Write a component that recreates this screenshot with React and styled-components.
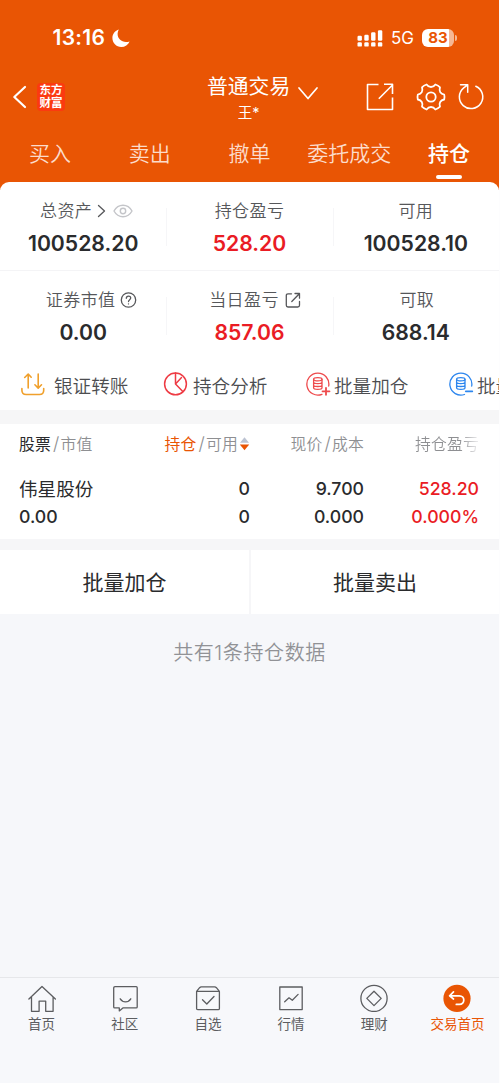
import React from 'react';
import styled, { createGlobalStyle } from 'styled-components';

const ORANGE = '#e95504';
const RED = '#ea1c24';
const INK = '#2a2b2d';

const GlobalStyle = createGlobalStyle`
  * { box-sizing: border-box; }
  body {
    margin: 0;
    background: #fdfdfe;
    font-family: Inter, 'Noto Sans CJK SC', sans-serif;
    color: ${INK};
  }
`;

const Page = styled.div`
  width: 499px;
  height: 1083px;
  display: flex;
  flex-direction: column;
  overflow: hidden;
  background: #f6f7fa;
`;

const Header = styled.header`
  height: 190px;
  flex: none;
  background: ${ORANGE};
  color: #fff;
`;

const StatusBar = styled.div`
  height: 66px;
  padding: 10px 42px 0 52.5px;
  display: flex;
  align-items: center;
`;

const Clock = styled.span`
  font-size: 21px;
  font-weight: 600;
  line-height: 24px;
  letter-spacing: 0.3px;
  width: 59px;
  white-space: nowrap;
`;

const StatusRight = styled.div`
  margin-left: auto;
  display: flex;
  align-items: center;
`;

const Network = styled.span`
  width: 24px;
  margin: 0 7px 0 8px;
  font-size: 17px;
  line-height: 20px;
`;

const Battery = styled.div`
  width: 32px;
  height: 18px;
  border-radius: 6px;
  background: linear-gradient(90deg, #fff 84%, #f6b894 84%);
  color: ${ORANGE};
  font-size: 15px;
  font-weight: 700;
  line-height: 18px;
  text-align: center;
`;

const BatteryTip = styled.div`
  width: 2px;
  height: 6px;
  margin-left: 1px;
  border-radius: 0 2px 2px 0;
  background: #f6b894;
`;

const TitleBar = styled.div`
  height: 62px;
  display: grid;
  grid-template-columns: 179px 1fr 145px;
  align-items: center;
`;

const TitleLeft = styled.div`
  display: flex;
  align-items: center;
  padding: 0 0 1px 12px;
`;

const Logo = styled.div`
  width: 28px;
  height: 28px;
  margin-left: 10px;
  border-radius: 4px;
  background: #fb3a10;
  display: flex;
  flex-direction: column;
  align-items: center;
  justify-content: center;
  font-size: 11.5px;
  font-weight: 700;
  line-height: 12.5px;
`;

const TitleCenter = styled.div`
  display: flex;
  padding: 2px 0 0 28px;
`;

const Account = styled.div`
  display: flex;
  flex-direction: column;
  align-items: center;
`;

const AccountName = styled.span`
  font-size: 20.8px;
  line-height: 28px;
  white-space: nowrap;
`;

const AccountOwner = styled.span`
  font-size: 14.5px;
  line-height: 22px;
  margin-top: 1px;
`;

const TitleRight = styled.div`
  display: flex;
  align-items: center;
  padding: 0 0 1px 11px;
`;

const Tabs = styled.nav`
  display: grid;
  grid-template-columns: repeat(5, 1fr);
  padding-top: 11px;
`;

const Tab = styled.div`
  display: flex;
  flex-direction: column;
  align-items: center;
  font-size: 21px;
  line-height: 30px;
  font-weight: ${p => (p.$active ? 500 : 350)};
  color: ${p => (p.$active ? '#fff' : '#fcdccb')};
  white-space: nowrap;

  &::after {
    content: '';
    width: 26px;
    height: 4px;
    margin-top: 6px;
    border-radius: 2px;
    background: ${p => (p.$active ? '#fff' : 'transparent')};
  }
`;

const Sheet = styled.section`
  flex: none;
  margin-top: -8.5px;
  height: 228.5px;
  border-radius: 9px 9px 0 0;
  background: #fff;
`;

const SummaryRow = styled.div`
  height: ${p => p.$height}px;
  display: grid;
  grid-template-columns: repeat(3, 1fr);
  border-bottom: ${p => (p.$line ? '1px solid #f4f4f6' : 'none')};
`;

const SummaryCell = styled.div`
  position: relative;
  display: flex;
  flex-direction: column;
  align-items: center;
  padding-top: 16px;

  & + &::before {
    content: '';
    position: absolute;
    left: 0;
    top: 26px;
    width: 1px;
    height: 38px;
    background: #f6f6f8;
  }
`;

const SummaryLabel = styled.div`
  display: flex;
  align-items: center;
  height: 26px;
  padding-left: ${p => p.$indent || 0}px;
  font-size: 17px;
  font-weight: 350;
  letter-spacing: 0.4px;
  line-height: 26px;
  color: #56575a;
  white-space: nowrap;
`;

const SummaryValue = styled.div`
  margin-top: 5px;
  font-size: 21.2px;
  font-weight: 600;
  line-height: 28px;
  color: ${p => (p.$up ? RED : INK)};
`;

const Tools = styled.div`
  display: flex;
  height: 51px;
  padding-left: 20px;
  overflow: hidden;
`;

const Tool = styled.div`
  flex: none;
  width: 143px;
  display: flex;
  align-items: center;
  font-size: 18.6px;
  font-weight: 350;
  color: #4c4d50;
  white-space: nowrap;

  svg {
    margin-right: ${p => p.$gap}px;
  }
`;

const Holdings = styled.section`
  flex: none;
  height: 129px;
  border-top: 14px solid #f6f6f7;
  background: #fff;
`;

const HoldingRow = styled.div`
  display: grid;
  grid-template-columns: 120px 111px 114px 115px;
  padding: 0 0 0 19px;
  height: ${p => p.$height}px;
  margin-bottom: ${p => p.$gap || 0}px;
`;

const HeadCell = styled.div`
  display: flex;
  align-items: center;
  justify-content: ${p => (p.$left ? 'flex-start' : 'flex-end')};
  font-size: 15.8px;
  font-weight: 350;
  letter-spacing: 0.2px;
  color: #8e8f92;
  white-space: nowrap;
`;

const Strong = styled.span`
  font-weight: 400;
  color: ${p => p.$color};
`;

const Slash = styled.span`
  font-size: 18px;
  margin: 0 1px 0 2px;
`;

const Fade = styled.span`
  background: linear-gradient(90deg, #8e8f92 70%, #e4e4e6 96%);
  background-clip: text;
  color: transparent;
`;

const Cell = styled.div`
  display: flex;
  flex-direction: column;
  align-items: ${p => (p.$left ? 'flex-start' : 'flex-end')};
  font-size: 17.7px;
  font-weight: 500;
  line-height: 28px;
  color: ${p => (p.$up ? RED : INK)};
`;

const StockName = styled.span`
  font-size: 18.6px;
  font-weight: 400;
`;

const Actions = styled.div`
  flex: none;
  display: grid;
  grid-template-columns: 249px 1fr;
  gap: 2px;
  height: 75px;
  padding-top: 11px;
  background: #f6f6f8;
`;

const Action = styled.button`
  border: 0;
  padding: 0 0 3px;
  background: #fff;
  color: ${INK};
  font: inherit;
  font-size: 21px;
`;

const Count = styled.p`
  margin: 24px 0 0;
  font-size: 20px;
  font-weight: 350;
  line-height: 30px;
  letter-spacing: 0.6px;
  text-align: center;
  color: #919296;
`;

const BottomNav = styled.nav`
  flex: none;
  height: 106px;
  margin-top: auto;
  padding-top: 6px;
  display: grid;
  grid-template-columns: repeat(6, 1fr);
  border-top: 1px solid #e6e7ea;
  background: #f7f8fb;
`;

const NavItem = styled.div`
  display: flex;
  flex-direction: column;
  align-items: center;
  font-size: 13.5px;
  line-height: 20px;
  color: ${p => (p.$active ? ORANGE : '#5c5d60')};
  white-space: nowrap;

  svg {
    margin-bottom: 2px;
  }
`;

const Icon = styled.svg.attrs(p => ({
  width: p.$w,
  height: p.$h,
  viewBox: `0 0 ${p.$w} ${p.$h}`
}))`
  flex: none;
  display: block;
  fill: none;
  stroke: ${p => p.$color || 'currentColor'};
  stroke-width: ${p => p.$stroke ?? 1.4};
  stroke-linecap: round;
  stroke-linejoin: round;
  margin-left: ${p => p.$ml || 0}px;
`;

const MoonIcon = () => (
  <Icon $w={18} $h={19} $stroke={0}>
    <path fill="#fff" d="M6.8.6C3.300 1.700.4 4.900.4 9c0 5 3.900 8.900 8.900 8.900 3.700 0 6.900-2 8.300-5.500-6.200 2.300-12.300-1.600-12-7.800.1-1.500.5-2.800 1.200-4z" />
  </Icon>
);

const SIGNAL = [5, 6, 8.5, 10.5];

const SignalIcon = () => (
  <Icon $w={26} $h={19} $stroke={0}>
    {SIGNAL.map((h, i) => (
      <g key={i} fill="#fff">
        <rect x={0.5 + i * 6.8} y={11.7 - h} width="4.4" height={h} rx="1.2" />
        <rect x={0.5 + i * 6.8} y="13.2" width="4.4" height="4.4" rx="1.2" />
      </g>
    ))}
  </Icon>
);

const DatabaseIcon = ({ color, sign }) => (
  <Icon $w={25} $h={26} $color={color} $stroke={1.3}>
    <path d={sign === '+' ? 'M16 23.300A11 11 0 1 1 22.700 15' : 'M15.500 23.500A11 11 0 1 1 22.700 15'} />
    <ellipse cx="11.800" cy="8.300" rx="4.200" ry="1.600" />
    <path d="M7.600 8.300v8.400c0 .9 1.900 1.600 4.200 1.600s4.200-.7 4.200-1.600V8.300M7.600 11.100c0 .9 1.900 1.600 4.200 1.600s4.200-.7 4.200-1.600M7.600 13.900c0 .9 1.900 1.600 4.200 1.600s4.200-.7 4.200-1.600" />
    <path strokeWidth="1.800" d={sign === '+' ? 'M16.500 20.300h7M20 16.800v7' : 'M16.800 20.300h6.500'} />
  </Icon>
);

const TransferIcon = () => (
  <Icon $w={26} $h={26} $color="#f0a02c" $stroke={1.6}>
    <path d="M8.200 17V3.200M4.700 6.500L8.200 3l3 3.200M18.200 3v14M14.900 13.800l3.300 3.300 3.300-3.300M1.900 17.500v1.700c0 3 1.600 4.300 4.200 4.300h13.400c2.600 0 4.200-1.300 4.200-4.300v-1.700" />
  </Icon>
);

const PieIcon = () => (
  <Icon $w={25} $h={26} $color="#ee3b44" $stroke={1.5}>
    <circle cx="12.500" cy="12.900" r="10.900" />
    <path d="M12.500 2v10.900l7.300 7.600M12.500 12.900l6-6.300" />
  </Icon>
);

const NAV_ITEMS = [
  {
    label: '首页',
    icon: <path d="M.9 15L14 2.500 27.400 15M3.500 13v14.300h7.600V17.100h6.600v10.200h7.400V13" />
  },
  {
    label: '社区',
    icon: <path d="M4 2.700h21.200q1 0 1 1v19.200q0 1-1 1H11.900l-3.600 3v-3H3.700q-1 0-1-1V3.700q0-1 1.300-1zM9.200 14.800c2.700 4 8 4 10.600 0" />
  },
  {
    label: '自选',
    icon: <path d="M2.600 7.400h22.800v17q0 1.200-1.200 1.200H3.800q-1.200 0-1.200-1.200zM2.600 7.400l3-3.700q.7-.8 1.800-.8h13.200q1.100 0 1.800.8l3 3.700M8.500 15.700l4.300 4.300 7.200-7.500" />
  },
  {
    label: '行情',
    icon: <path d="M2.800 3h22.400v22.600H2.800zM7.700 17.700l4.300-3.900 3.300 2.500 5.800-5.900" />
  },
  {
    label: '理财',
    icon: (
      <>
        <circle cx="14" cy="14.400" r="13.100" />
        <path d="M14 7.200l7.200 7.200L14 21.600l-7.200-7.200z" />
      </>
    )
  },
  {
    label: '交易首页',
    active: true,
    icon: (
      <>
        <circle cx="14" cy="14.400" r="13.600" fill={ORANGE} stroke="none" />
        <path stroke="#fff" strokeWidth="1.700" d="M10.500 7.800l-3.900 4 3.900 3.200M6.900 11.800h9.400c6 0 6 8.600 0 8.600h-3" />
      </>
    )
  }
];

const TABS = ['买入', '卖出', '撤单', '委托成交', '持仓'];

function App() {
  return (
    <>
      <GlobalStyle />
      <Page>
        <Header>
          <StatusBar>
            <Clock>13:16</Clock>
            <MoonIcon />
            <StatusRight>
              <SignalIcon />
              <Network>5G</Network>
              <Battery>83</Battery>
              <BatteryTip />
            </StatusRight>
          </StatusBar>

          <TitleBar>
            <TitleLeft>
              <Icon $w={15} $h={24} $stroke={2.2}>
                <path d="M13 2L2.300 12 13 22" />
              </Icon>
              <Logo>
                <span>东方</span>
                <span>财富</span>
              </Logo>
            </TitleLeft>
            <TitleCenter>
              <Account>
                <AccountName>普通交易</AccountName>
                <AccountOwner>王*</AccountOwner>
              </Account>
              <Icon $w={22} $h={34} $ml={7} $stroke={1.7}>
                <path d="M2 15l9 10.500L20 15" />
              </Icon>
            </TitleCenter>
            <TitleRight>
              {/* share, settings, refresh */}
              <Icon $w={30} $h={30} $stroke={1.6}>
                <path strokeLinecap="butt" d="M13.500 2.500h-11v25h25V15.500M13.800 16.800L28 2.500M19 2.300h8.500V12" />
              </Icon>
              <Icon $w={30} $h={30} $ml={21} $stroke={1.8}>
                <path d="M10.600 2.500c1.300 2 2.700 2.500 4.400 2.500s3.100-.5 4.400-2.500c2 .6 3.400 1.500 4.600 2.800-.8 2.500-.4 3.700.3 4.900.9 1.400 2.200 2.100 3.900 2.400.5 2 .5 3.200 0 4.900-2.200.4-3.300 1.300-4 2.500-.8 1.400-.9 2.900-.2 4.700-1.400 1.400-2.800 2.200-4.600 2.800-1.200-1.700-2.600-2.500-4.400-2.500s-3.200.8-4.400 2.500c-1.800-.6-3.200-1.400-4.600-2.800.7-1.800.6-3.300-.2-4.700-.7-1.200-1.800-2.100-4-2.500-.5-1.700-.5-2.900 0-4.900 1.700-.3 3-1 3.900-2.400.7-1.200 1.100-2.400.3-4.900 1.200-1.300 2.600-2.200 4.600-2.800z" />
                <circle cx="15" cy="15" r="4.700" />
              </Icon>
              <Icon $w={28} $h={30} $ml={11} $stroke={1.5}>
                <path d="M18.800 4.200A11.700 11.700 0 1 1 6.700 5.800L10.700 2.800M3.500 2.800h7.200v7.400" />
              </Icon>
            </TitleRight>
          </TitleBar>

          <Tabs>
            {TABS.map(name => (
              <Tab key={name} $active={name === '持仓'}>{name}</Tab>
            ))}
          </Tabs>
        </Header>

        <Sheet>
          <SummaryRow $height={89} $line>
            <SummaryCell>
              <SummaryLabel $indent={7}>
                总资产
                <Icon $w={9} $h={14} $ml={5} $stroke={1.3}>
                  <path d="M1.500 1.500L7.500 7l-6 5.500" />
                </Icon>
                <Icon $w={20} $h={14} $ml={7} $color="#c4c5c9" $stroke={1.4}>
                  <path d="M1 7c4.200-7.600 13.800-7.600 18 0-4.200 7.600-13.800 7.600-18 0z" />
                  <circle cx="10" cy="7" r="2.700" />
                </Icon>
              </SummaryLabel>
              <SummaryValue>100528.20</SummaryValue>
            </SummaryCell>
            <SummaryCell>
              <SummaryLabel>持仓盈亏</SummaryLabel>
              <SummaryValue $up>528.20</SummaryValue>
            </SummaryCell>
            <SummaryCell>
              <SummaryLabel>可用</SummaryLabel>
              <SummaryValue>100528.10</SummaryValue>
            </SummaryCell>
          </SummaryRow>

          <SummaryRow $height={88}>
            <SummaryCell>
              <SummaryLabel $indent={17}>
                证券市值
                <Icon $w={17} $h={18} $ml={5} $stroke={1.3}>
                  <circle cx="8.500" cy="9" r="7.200" />
                  <path d="M6.300 7.300c.1-3 4.500-2.900 4.400-.2 0 1.700-2.200 1.600-2.200 3.500M8.500 12.800v.1" />
                </Icon>
              </SummaryLabel>
              <SummaryValue>0.00</SummaryValue>
            </SummaryCell>
            <SummaryCell>
              <SummaryLabel $indent={11}>
                当日盈亏
                <Icon $w={16} $h={16} $ml={6} $stroke={1.3}>
                  <path d="M6.500 1.800H3Q1.300 1.800 1.300 3.500v9.800Q1.300 15 3 15h9.800q1.700 0 1.700-1.700V9.500M6.800 9.500L14.300 1.800M10 1.500h4.500v4.700" />
                </Icon>
              </SummaryLabel>
              <SummaryValue $up>857.06</SummaryValue>
            </SummaryCell>
            <SummaryCell>
              <SummaryLabel $indent={2}>可取</SummaryLabel>
              <SummaryValue>688.14</SummaryValue>
            </SummaryCell>
          </SummaryRow>

          <Tools>
            <Tool $gap={8}><TransferIcon />银证转账</Tool>
            <Tool $gap={5}><PieIcon />持仓分析</Tool>
            <Tool $gap={3}><DatabaseIcon color="#ee4a4c" sign="+" />批量加仓</Tool>
            <Tool $gap={3}><DatabaseIcon color="#2d86ee" sign="-" />批量卖出</Tool>
          </Tools>
        </Sheet>

        <Holdings>
          <HoldingRow $height={39} $gap={12}>
            <HeadCell $left>
              <Strong $color={INK}>股票</Strong><Slash>/</Slash>市值
            </HeadCell>
            <HeadCell>
              <Strong $color={ORANGE}>持仓</Strong><Slash>/</Slash>可用
              <Icon $w={11} $h={16} $ml={1} $stroke={0}>
                <path fill="#bcc3d2" d="M5.500 1.200L10 6.800H1z" />
                <path fill={ORANGE} d="M.8 8.500h9.400L5.500 14.300z" />
              </Icon>
            </HeadCell>
            <HeadCell>现价<Slash>/</Slash>成本</HeadCell>
            <HeadCell><Fade>持仓盈亏</Fade></HeadCell>
          </HoldingRow>
          <HoldingRow $height={60}>
            <Cell $left>
              <StockName>伟星股份</StockName>
              <span>0.00</span>
            </Cell>
            <Cell>
              <span>0</span>
              <span>0</span>
            </Cell>
            <Cell>
              <span>9.700</span>
              <span>0.000</span>
            </Cell>
            <Cell $up>
              <span>528.20</span>
              <span>0.000%</span>
            </Cell>
          </HoldingRow>
        </Holdings>

        <Actions>
          <Action>批量加仓</Action>
          <Action>批量卖出</Action>
        </Actions>

        <Count>共有1条持仓数据</Count>

        <BottomNav>
          {NAV_ITEMS.map(item => (
            <NavItem key={item.label} $active={item.active}>
              <Icon $w={28} $h={28} $stroke={1.3}>{item.icon}</Icon>
              {item.label}
            </NavItem>
          ))}
        </BottomNav>
      </Page>
    </>
  );
}

export default App;
